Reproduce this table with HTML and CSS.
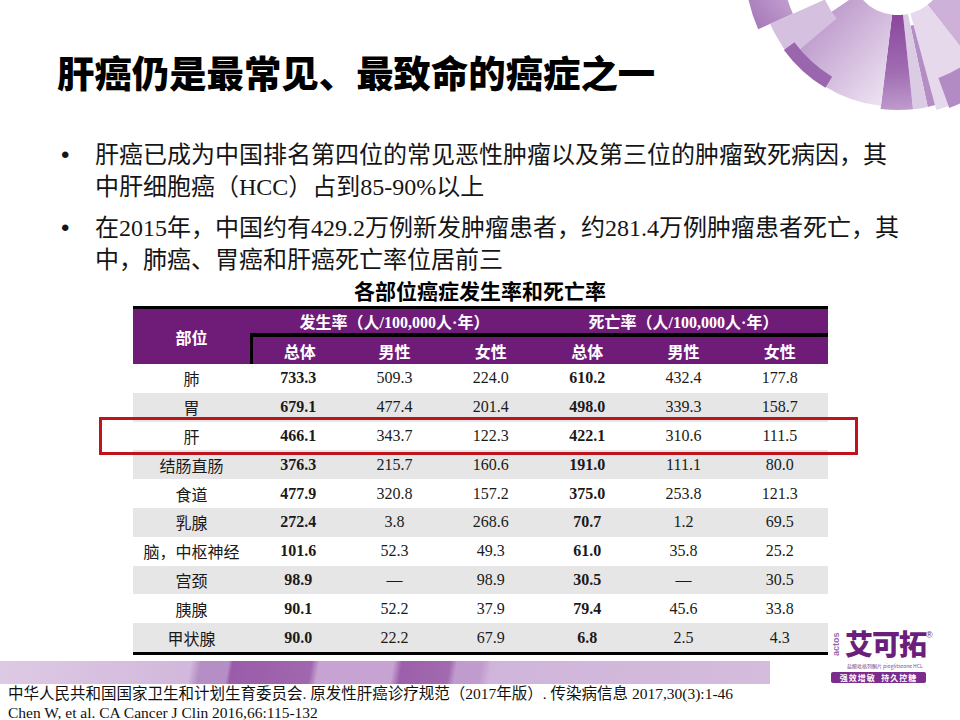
FILE: index.html
```
<!DOCTYPE html>
<html lang="zh-CN">
<head>
<meta charset="utf-8">
<title>肝癌仍是最常见、最致命的癌症之一</title>
<link rel="stylesheet" href="styles.css">
</head>
<body>
<div class="slide">
  <svg class="fan" viewBox="720 0 240 130" xmlns="http://www.w3.org/2000/svg">
    <defs>
      <linearGradient id="gLight" gradientUnits="userSpaceOnUse" x1="800" y1="30" x2="880" y2="105">
        <stop offset="0" stop-color="#bb96ca"/>
        <stop offset="1" stop-color="#ece2f1"/>
      </linearGradient>
      <linearGradient id="gDark" gradientUnits="userSpaceOnUse" x1="890" y1="15" x2="900" y2="110">
        <stop offset="0" stop-color="#8a469c"/>
        <stop offset="0.6" stop-color="#a06db2"/>
        <stop offset="1" stop-color="#bf9bcd"/>
      </linearGradient>
      <linearGradient id="gMid" gradientUnits="userSpaceOnUse" x1="750" y1="25" x2="795" y2="-10">
        <stop offset="0" stop-color="#a576b8"/>
        <stop offset="1" stop-color="#c7a8d4"/>
      </linearGradient>
    </defs>
    <path d="M1039 18.3 A150 150 0 0 1 990.4 85.2 L927.6 4.8 A48 48 0 0 0 943.1 -16.6 Z" fill="#cdb1d9"/>
    <path d="M989.2 83.6 A148 148 0 0 1 936.3 110 L910.4 13.4 A48 48 0 0 0 927.6 4.8 Z" fill="#e6d9ec"/>
    <path d="M977.5 94.2 A150 150 0 0 1 949.3 108 L938.4 77.9 A118 118 0 0 0 960.5 67.1 Z" fill="#b38bc4"/>
    <path d="M935 105.1 A143 143 0 0 1 927.7 106.9 L910.5 25.7 A60 60 0 0 0 913.5 25 Z" fill="#b48dc4"/>
    <path d="M927.7 106.9 A143 143 0 0 1 913 109.3 L903 14.7 A48 48 0 0 0 908 14 Z" fill="#dccbe5"/>
    <path d="M913 109.3 A143 143 0 0 1 880.6 109 L892.1 14.7 A48 48 0 0 0 903 14.7 Z" fill="url(#gDark)"/>
    <path d="M880.9 106 A140 140 0 0 1 781.9 45.3 L858.2 -6.2 A48 48 0 0 0 892.1 14.7 Z" fill="url(#gLight)"/>
    <path d="M790.8 57 A140 140 0 0 1 770.1 24 L824.9 -0.5 A80 80 0 0 0 836.7 18.4 Z" fill="#d6c0e0"/>
    <path d="M758.2 29.2 A153 153 0 0 1 745 -33 L783 -33 A115 115 0 0 0 792.9 13.8 Z" fill="url(#gMid)"/>
    <path d="M825.4 87.8 A141 141 0 0 1 783.9 49.9 L794.4 42.3 A128 128 0 0 0 832.1 76.7 Z" fill="#9a66ad"/>
  </svg>

  <h1 class="title">肝癌仍是最常见、最致命的癌症之一</h1>

  <ul class="points">
    <li><span class="dot">•</span><p>肝癌已成为中国排名第四位的常见恶性肿瘤以及第三位的肿瘤致死病因，其中肝细胞癌（HCC）占到85-90%以上</p></li>
    <li><span class="dot">•</span><p>在2015年，中国约有429.2万例新发肿瘤患者，约281.4万例肿瘤患者死亡，其中，肺癌、胃癌和肝癌死亡率位居前三</p></li>
  </ul>

  <div class="caption">各部位癌症发生率和死亡率</div>

  <div class="table-wrap">
    <table class="rates">
      <colgroup><col class="c0"><col class="cn"><col class="cn"><col class="cn"><col class="cn"><col class="cn"><col class="cn"></colgroup>
      <thead>
        <tr class="h1">
          <th rowspan="2" class="site">部位</th>
          <th colspan="3" class="grp">发生率（人/100,000人·年）</th>
          <th colspan="3" class="grp">死亡率（人/100,000人·年）</th>
        </tr>
        <tr class="h2">
          <th class="first">总体</th><th>男性</th><th>女性</th><th>总体</th><th>男性</th><th>女性</th>
        </tr>
      </thead>
      <tbody>
        <tr><td class="name">肺</td><td class="b">733.3</td><td>509.3</td><td>224.0</td><td class="b">610.2</td><td>432.4</td><td>177.8</td></tr>
        <tr><td class="name">胃</td><td class="b">679.1</td><td>477.4</td><td>201.4</td><td class="b">498.0</td><td>339.3</td><td>158.7</td></tr>
        <tr><td class="name">肝</td><td class="b">466.1</td><td>343.7</td><td>122.3</td><td class="b">422.1</td><td>310.6</td><td>111.5</td></tr>
        <tr><td class="name">结肠直肠</td><td class="b">376.3</td><td>215.7</td><td>160.6</td><td class="b">191.0</td><td>111.1</td><td>80.0</td></tr>
        <tr><td class="name">食道</td><td class="b">477.9</td><td>320.8</td><td>157.2</td><td class="b">375.0</td><td>253.8</td><td>121.3</td></tr>
        <tr><td class="name">乳腺</td><td class="b">272.4</td><td>3.8</td><td>268.6</td><td class="b">70.7</td><td>1.2</td><td>69.5</td></tr>
        <tr><td class="name">脑，中枢神经</td><td class="b">101.6</td><td>52.3</td><td>49.3</td><td class="b">61.0</td><td>35.8</td><td>25.2</td></tr>
        <tr><td class="name">宫颈</td><td class="b">98.9</td><td>—</td><td>98.9</td><td class="b">30.5</td><td>—</td><td>30.5</td></tr>
        <tr><td class="name">胰腺</td><td class="b">90.1</td><td>52.2</td><td>37.9</td><td class="b">79.4</td><td>45.6</td><td>33.8</td></tr>
        <tr><td class="name">甲状腺</td><td class="b">90.0</td><td>22.2</td><td>67.9</td><td class="b">6.8</td><td>2.5</td><td>4.3</td></tr>
      </tbody>
    </table>
    <div class="highlight"></div>
  </div>

  <div class="band"></div>
  <div class="refs">
    <div>中华人民共和国国家卫生和计划生育委员会. 原发性肝癌诊疗规范（2017年版）. 传染病信息 2017,30(3):1-46</div>
    <div>Chen W, et al. CA Cancer J Clin 2016,66:115-132</div>
  </div>

  <div class="logo">
    <div class="logo-top">
      <span class="actos">actos</span>
      <span class="brand">艾可拓</span>
      <span class="reg">®</span>
    </div>
    <div class="sub">盐酸吡格列酮片 pioglitazone HCL</div>
    <div class="tag">强效增敏&nbsp;&nbsp;持久控糖</div>
  </div>
</div>
</body>
</html>
```

FILE: styles.css
```
* { box-sizing: border-box; }

html, body {
  margin: 0;
  padding: 0;
  background: #fff;
}

body {
  width: 960px;
  height: 720px;
  overflow: hidden;
  font-family: "Liberation Serif", "Noto Sans CJK SC", serif;
  color: #111;
}

.slide {
  position: relative;
  width: 960px;
  height: 720px;
  overflow: hidden;
}

.fan {
  position: absolute;
  left: 720px;
  top: 0;
  width: 240px;
  height: 130px;
}

.title {
  margin: 50px 0 0 57px;
  font: 900 37.4px/44px "Noto Sans CJK SC", sans-serif;
  color: #000;
  white-space: nowrap;
}

.points {
  list-style: none;
  margin: 45px 0 0 57px;
  padding: 0;
}

.points li {
  display: flex;
  font-size: 24px;
  line-height: 32px;
  color: #151515;
}

.points li + li {
  margin-top: 9px;
}

.dot {
  flex: 0 0 38px;
  padding-left: 4px;
  font-family: "Liberation Sans", sans-serif;
}

.points p {
  margin: 0;
  width: 812px;
}

.caption {
  margin-top: 2px;
  text-align: center;
  font: 700 21px/24px "Noto Sans CJK SC", sans-serif;
  color: #000;
}

.table-wrap {
  position: relative;
  margin: 4px 0 0 133px;
  width: 695px;
}

.rates {
  width: 695px;
  border-collapse: separate;
  border-spacing: 0;
  table-layout: fixed;
  border-top: 3px solid #000;
  border-bottom: 3px solid #000;
  font-size: 16px;
}

.rates .c0 { width: 117px; }
.rates .cn { width: 96.33px; }

.rates th {
  background: #6f1c79;
  color: #fff;
  font-weight: 700;
  padding: 0;
  text-align: center;
  vertical-align: middle;
  font-family: "Liberation Serif", "Noto Sans CJK SC", serif;
}

.rates .h1 { height: 28px; }
.rates .h2 { height: 27px; }

.rates .grp {
  border-bottom: 4px solid #000;
}

.rates .first {
  border-left: 3px solid #000;
}

.rates tbody tr { height: 28.8px; }

.rates td {
  padding: 0;
  text-align: center;
  vertical-align: middle;
  color: #1a1a1a;
}

.rates tbody tr:nth-child(even) td {
  background: #e6e6e6;
}

.rates td.b { font-weight: 700; }

.highlight {
  position: absolute;
  left: -34px;
  top: 111px;
  width: 759px;
  height: 38px;
  border: 3px solid #c0141c;
}

.band {
  margin-top: 6px;
  width: 770px;
  height: 23px;
  background: linear-gradient(100deg,
    #ddcae4 0%, #d2b8dc 24.7%, #b48ec4 26%, #b48ec4 29.6%,
    #9a5ca9 30.1%, #a067ae 40.3%, #c6a3d2 41.3%, #c6a3d2 50.9%,
    #9c5faa 52%, #a26aaf 58.2%, #c09bcd 59.1%, #c09bcd 62.3%,
    #d0b5da 63.6%, #d4bcdd 100%);
}

.refs {
  padding-left: 8px;
  font-size: 15.5px;
  line-height: 19px;
  color: #111;
  white-space: nowrap;
}

.logo {
  position: absolute;
  left: 831px;
  top: 627px;
  width: 115px;
  color: #6b1f7c;
}

.logo-top {
  display: flex;
  align-items: flex-start;
  height: 32px;
}

.actos {
  writing-mode: vertical-rl;
  transform: rotate(180deg);
  font: 700 9px/11px "Liberation Sans", sans-serif;
  color: #9a6aad;
  height: 28px;
  margin-top: 3px;
  text-align: center;
}

.brand {
  margin-left: 3px;
  font: 900 28px/32px "Noto Sans CJK SC", sans-serif;
  letter-spacing: -1px;
}

.reg {
  margin-top: 4px;
  font: 9px/1 "Liberation Sans", sans-serif;
}

.sub {
  margin: 4px 0 0 16px;
  font: 5px/6px "Noto Sans CJK SC", sans-serif;
  color: #7a4a8a;
  white-space: nowrap;
}

.tag {
  margin-top: 3px;
  width: 95px;
  height: 11px;
  background: #7b2c8c;
  border-radius: 2px;
  color: #fff;
  font: 700 8px/11px "Noto Sans CJK SC", sans-serif;
  text-align: center;
  letter-spacing: 1px;
}
```
